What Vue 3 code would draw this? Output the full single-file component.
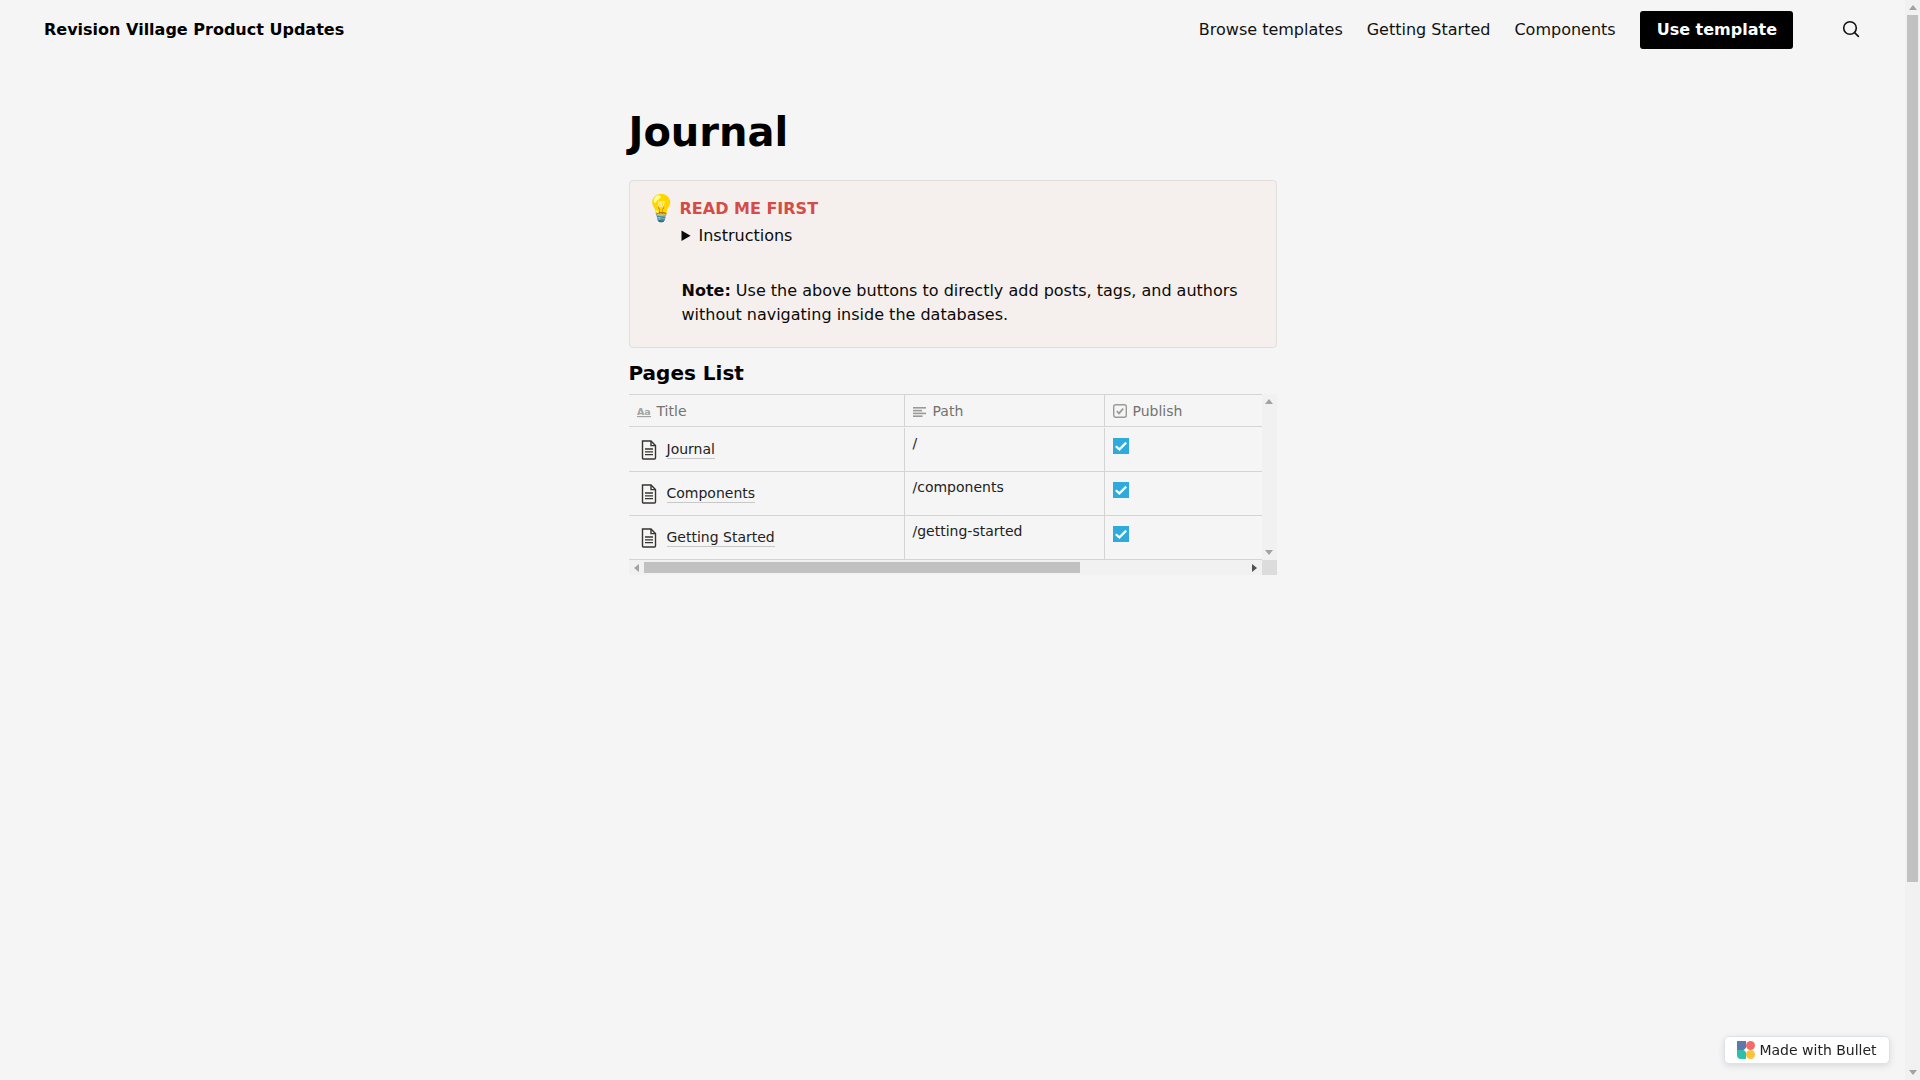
<script setup>
const rows = [
  { title: 'Journal', path: '/' },
  { title: 'Components', path: '/components' },
  { title: 'Getting Started', path: '/getting-started' },
]
</script>

<template>
  <div class="page">
    <div class="content">
      <header class="nav">
        <a class="brand">Revision Village Product Updates</a>
        <nav class="links">
          <a class="link">Browse templates</a>
          <a class="link">Getting Started</a>
          <a class="link">Components</a>
          <a class="cta">Use template</a>
          <svg class="search" viewBox="0 0 20 20" width="20" height="20" fill="none" stroke="#111" stroke-width="1.6" stroke-linecap="round">
            <circle cx="9" cy="9" r="6.3" />
            <path d="M13.6 13.6 L17.4 17.4" />
          </svg>
        </nav>
      </header>

      <main class="main">
        <h1 class="title">Journal</h1>

        <section class="callout">
          <span class="bulb">💡</span>
          <div class="callout-body">
            <div class="callout-head">READ ME FIRST</div>
            <details class="details"><summary>Instructions</summary></details>
            <p class="note"><b>Note:</b> Use the above buttons to directly add posts, tags, and authors without navigating inside the databases.</p>
          </div>
        </section>

        <h2 class="sub">Pages List</h2>

        <div class="table-wrap">
          <div class="scroller">
            <div class="grid">
              <div class="row head">
                <div class="cell c1 hcell">
                  <svg class="hicon" viewBox="0 0 14 14" width="14" height="14" fill="#a3a3a0">
                    <text x="0" y="10.5" font-size="9.5" font-family="DejaVu Sans" font-weight="700">Aa</text>
                    <rect x="0" y="12" width="14" height="1.2" />
                  </svg>
                  Title
                </div>
                <div class="cell c2 hcell">
                  <svg class="hicon" viewBox="0 0 14 14" width="14" height="14" fill="#9a9a97">
                    <rect x="0" y="3" width="13" height="1.6" />
                    <rect x="0" y="5.8" width="9" height="1.6" />
                    <rect x="0" y="8.6" width="13" height="1.6" />
                    <rect x="0" y="11.4" width="9.5" height="1.6" />
                  </svg>
                  Path
                </div>
                <div class="cell c3 hcell">
                  <svg class="hicon" viewBox="0 0 14 14" width="14" height="14" fill="none" stroke="#9a9a97">
                    <rect x="0.7" y="0.7" width="12.6" height="12.6" rx="2" stroke-width="1.4" />
                    <path d="M3.8 7.2 L6 9.4 L10.2 4.6" stroke-width="1.7" />
                  </svg>
                  Publish
                </div>
                <div class="cell c4"></div>
              </div>

              <div v-for="r in rows" :key="r.title" class="row body">
                <div class="cell c1 tcell">
                  <svg class="doc" viewBox="0 0 16 20" width="16" height="20" fill="none" stroke="#37352f" stroke-width="1.4">
                    <path d="M1.5 1 H10 L14.5 5.6 V18 A1 1 0 0 1 13.5 19 H2.5 A1 1 0 0 1 1.5 18 Z" />
                    <path d="M10 1 V5.6 H14.5" />
                    <path d="M4 9 H12 M4 11.8 H12 M4 14.6 H12" stroke-width="1.3" />
                  </svg>
                  <span class="tlink">{{ r.title }}</span>
                </div>
                <div class="cell c2 pcell">{{ r.path }}</div>
                <div class="cell c3 ccell">
                  <svg viewBox="0 0 16 16" width="16" height="16">
                    <rect width="16" height="16" fill="#2eaadc" />
                    <path d="M2.8 8.2 L6.4 11.4 L13.2 4.6" fill="none" stroke="#fff" stroke-width="2.2" />
                  </svg>
                </div>
                <div class="cell c4"></div>
              </div>
            </div>
          </div>
          <div class="vtrack table-vtrack">
            <i class="arrow up"></i>
            <i class="arrow down"></i>
          </div>
          <div class="htrack">
            <i class="arrow left"></i>
            <div class="hthumb"></div>
            <i class="arrow right"></i>
          </div>
          <div class="corner"></div>
        </div>
      </main>
    </div>

    <aside class="vtrack page-vtrack">
      <i class="arrow up"></i>
      <div class="vthumb"></div>
      <i class="arrow down"></i>
    </aside>

    <a class="badge">
      <svg viewBox="0 0 18 18" width="18" height="18">
        <rect width="9" height="9" fill="#5f77ad" />
        <circle cx="13.5" cy="4.5" r="4.5" fill="#f26b6b" />
        <path d="M0 9 H9 V18 H4 A4 4 0 0 1 0 14 Z" fill="#2fc0ab" />
        <circle cx="13.5" cy="13.5" r="4.5" fill="#fdc23c" />
        <path d="M9 6.5 L10 8 L11.5 9 L10 10 L9 11.5 L8 10 L6.5 9 L8 8 Z" fill="#fff" />
      </svg>
      Made with Bullet
    </a>
  </div>
</template>

<style>
body {
  margin: 0;
  background: #f5f5f5;
}
</style>

<style scoped>
.page {
  height: 100vh;
  overflow: hidden;
  display: flex;
  background: #f5f5f5;
  color: #0a0a0a;
  font-family: "DejaVu Sans", sans-serif;
  font-size: 16px;
}
.content {
  flex: 1;
  min-width: 0;
}
.nav {
  height: 58px;
  padding: 0 44px;
  display: flex;
  align-items: center;
  justify-content: space-between;
}
.brand {
  font-weight: 700;
  font-size: 16px;
  color: #000;
}
.links {
  display: flex;
  align-items: center;
}
.link {
  font-size: 16px;
  margin-right: 24px;
  color: #111;
}
.cta {
  box-sizing: border-box;
  background: #000;
  color: #fff;
  font-weight: 700;
  font-size: 16px;
  height: 38px;
  padding: 0 16px 2px 17px;
  border-radius: 3px;
  display: flex;
  align-items: center;
  margin: 2px 48px 0 0;
}
.search {
  display: block;
}
.main {
  width: 648px;
  margin: 0 auto;
}
.title {
  margin: 48px 0 0;
  font-size: 40px;
  line-height: 52px;
  font-weight: 700;
  color: #000;
}
.callout {
  box-sizing: border-box;
  margin-top: 22px;
  height: 168px;
  background: #f5f0ee;
  border: 1px solid #e2dedc;
  border-radius: 4px;
  padding: 12px 24px 0 15px;
  display: flex;
}
.bulb {
  font-size: 26px;
  line-height: 30px;
  width: 37px;
  flex: none;
}
.callout-head {
  font-weight: 700;
  color: #d44c47;
  line-height: 24px;
  margin-left: -2px;
  margin-top: 4px;
}
.details {
  line-height: 24px;
  margin-top: 3px;
}
.note {
  margin: 31px 0 0;
  line-height: 24px;
}
.sub {
  margin: 12px 0 0;
  font-size: 20px;
  line-height: 26px;
  font-weight: 700;
  color: #000;
}
.table-wrap {
  margin-top: 8px;
  display: grid;
  grid-template-columns: 633px 15px;
  grid-template-rows: 166px 15px;
}
.scroller {
  overflow: hidden;
}
.grid {
  width: 878px;
  border-top: 1px solid #d4d4d4;
}
.row {
  display: flex;
  border-bottom: 1px solid #d4d4d4;
  box-sizing: border-box;
}
.head {
  height: 32px;
}
.body {
  height: 44px;
}
.head + .body {
  height: 45px;
  padding-top: 1px;
}
.cell {
  box-sizing: border-box;
  border-right: 1px solid #d4d4d4;
  padding: 0 8px;
  font-size: 14px;
}
.c1 { width: 276px; }
.c2 { width: 200px; }
.c3 { width: 200px; }
.c4 { flex: 1; border-right: 0; }
.hcell {
  display: flex;
  align-items: center;
  gap: 6px;
  color: #73736f;
}
.hicon {
  flex: none;
}
.tcell {
  display: flex;
  align-items: center;
  padding-left: 12px;
  gap: 10px;
}
.doc {
  flex: none;
}
.tlink {
  border-bottom: 1px solid #c8c8c8;
  line-height: 17px;
  color: #222;
}
.pcell {
  padding-top: 5px;
  line-height: 20px;
  color: #222;
}
.ccell {
  padding-top: 10px;
}
.ccell svg {
  display: block;
}

/* hand-drawn scrollbars */
.vtrack {
  display: flex;
  flex-direction: column;
  align-items: center;
  background: #f1f1f1;
}
.page-vtrack {
  width: 15px;
  flex: none;
}
.vthumb {
  width: 11px;
  height: 867px;
  background: #c1c1c1;
}
.down {
  margin-top: auto;
}
.htrack {
  display: flex;
  align-items: center;
  background: #f1f1f1;
}
.hthumb {
  width: 436px;
  height: 11px;
  background: #c1c1c1;
}
.corner {
  background: #dcdcdc;
}
.arrow {
  display: block;
  flex: none;
  width: 0;
  height: 0;
  border-style: solid;
  border-color: transparent;
}
.up {
  margin: 5px 0 5px;
  border-width: 0 4px 5px;
  border-bottom-color: #a3a3a3;
}
.down {
  margin-bottom: 5px;
  border-width: 5px 4px 0;
  border-top-color: #a3a3a3;
}
.left {
  margin: 0 5px 0 5px;
  border-width: 4px 5px 4px 0;
  border-right-color: #a3a3a3;
}
.right {
  margin: 0 5px 0 auto;
  border-width: 4px 0 4px 5px;
  border-left-color: #505050;
}

.badge {
  position: fixed;
  right: 30px;
  bottom: 16px;
  box-sizing: border-box;
  height: 28px;
  width: 166px;
  display: flex;
  align-items: center;
  justify-content: center;
  gap: 4px;
  background: #fff;
  border: 1px solid #dde2ea;
  border-radius: 5px;
  font-size: 14px;
  color: #222;
  box-shadow: 0 2px 6px rgba(60, 70, 90, 0.15);
}
</style>
